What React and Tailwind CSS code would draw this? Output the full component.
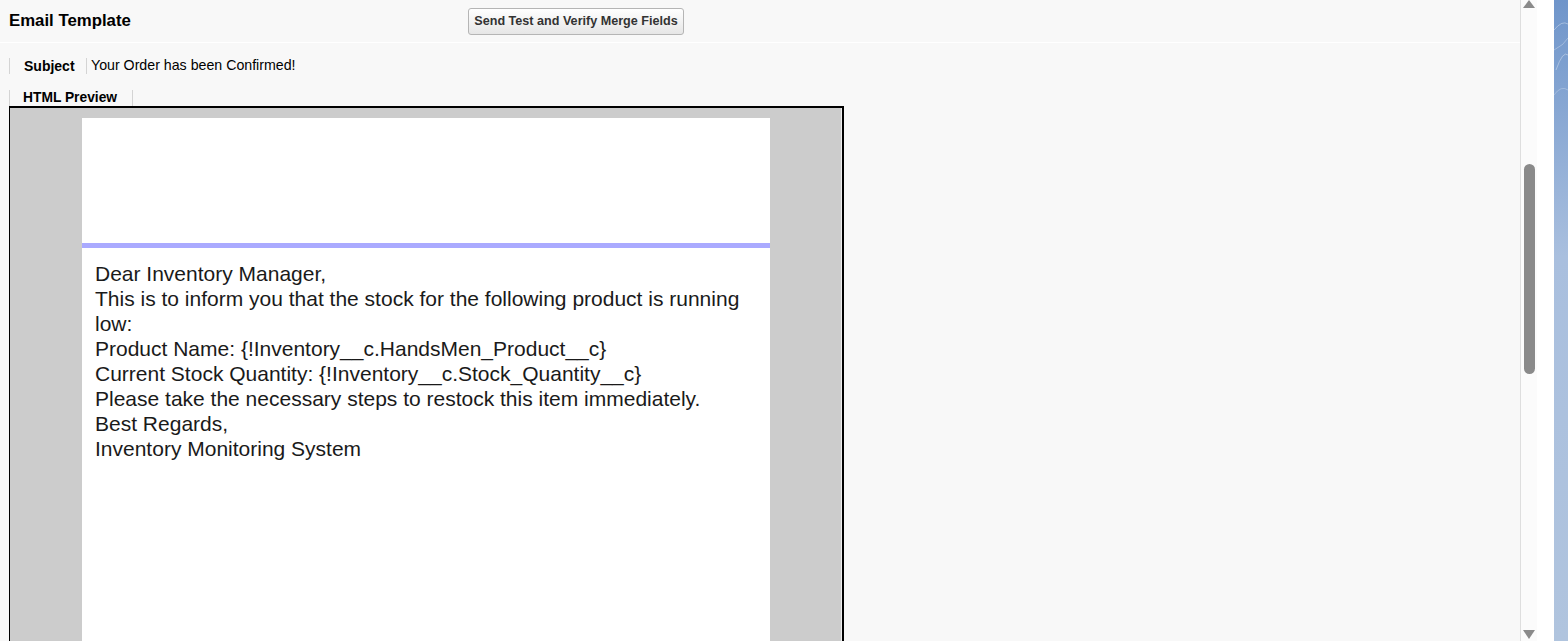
export default function App() {
  const lines = [
    "Dear Inventory Manager,",
    "This is to inform you that the stock for the following product is running low:",
    "Product Name: {!Inventory__c.HandsMen_Product__c}",
    "Current Stock Quantity: {!Inventory__c.Stock_Quantity__c}",
    "Please take the necessary steps to restock this item immediately.",
    "Best Regards,",
    "Inventory Monitoring System",
  ];
  return (
    <div
      className="flex h-[641px] w-[1568px] overflow-hidden bg-white"
      style={{ fontFamily: '"Liberation Sans", Arial, sans-serif' }}
    >
      {/* main page */}
      <div className="flex w-[1521px] shrink-0 flex-col border-r border-[#dedede] bg-[#f8f8f8]">
        {/* header */}
        <div className="flex h-[43px] shrink-0 items-center border-b border-white">
          <div className="w-[468px] shrink-0 pl-[9px] text-[16.8px] font-bold text-black">
            Email Template
          </div>
          <button className="h-[27px] w-[216px] rounded-[3px] border border-[#b5b5b5] bg-gradient-to-b from-[#ffffff] to-[#e6e6e6] text-[12.6px] font-bold text-[#333]">
            Send Test and Verify Merge Fields
          </button>
        </div>
        {/* subject row */}
        <div className="mt-[15px] flex h-[16px] items-center pl-[9px] text-[14.2px] text-black">
          <div className="flex h-full w-[77px] items-center border-l border-[#d4d4d4] pl-[14px] text-[14px] font-bold">
            Subject
          </div>
          <div className="flex h-full items-center border-l border-[#d4d4d4] pl-[4px]">
            Your Order has been Confirmed!
          </div>
        </div>
        {/* HTML Preview tab */}
        <div className="mt-[16px] flex h-[16px] items-center pl-[9px] text-[13.8px] font-bold text-black">
          <div className="flex h-full w-[124px] items-center border-x border-[#d4d4d4] pl-[13px]">
            HTML Preview
          </div>
        </div>
        {/* frame */}
        <div className="ml-[9px] h-[600px] w-[835px] shrink-0 border-l border-r-2 border-t-2 border-black">
          <div className="h-full border-r border-[#eeeeee] bg-[#cccccc] pt-[10px]">
            <div className="ml-[72px] h-full w-[688px] bg-white">
              <div className="h-[125px]" />
              <div className="h-[5px] bg-[#aaaaff]" />
              <div className="px-[13px] pt-[13px] text-[21px] leading-[25px] text-[#1a1a1a]">
                {lines.map((l, i) => (
                  <div key={i}>{l}</div>
                ))}
              </div>
            </div>
          </div>
        </div>
      </div>
      {/* scrollbar */}
      <div className="flex w-[16px] shrink-0 flex-col items-center bg-[#fbfbfb]">
        <svg width="14" height="9" viewBox="0 0 14 9" className="shrink-0">
          <polygon points="7,0 13,8 1,8" fill="#8a8a8a" />
        </svg>
        <div className="mt-[155px] h-[210px] w-[11px] shrink-0 rounded-full bg-[#8a8a8a]" />
        <div className="flex-1" />
        <svg width="14" height="11" viewBox="0 0 14 11" className="mb-[1px] shrink-0">
          <polygon points="1,1 13,1 7,10" fill="#8a8a8a" />
        </svg>
      </div>
      <div className="w-[17px] shrink-0 bg-white" />
      {/* blue background */}
      <div className="relative flex-1 bg-gradient-to-b from-[#6f95ca] via-[#a9bfde] via-40% to-[#b0c4de]">
        <svg className="absolute inset-0" width="14" height="300" viewBox="0 0 14 300">
          <path d="M0 30 Q8 20 14 24" stroke="#ffffff" strokeOpacity="0.35" fill="none" />
          <path d="M0 50 Q10 45 14 38" stroke="#ffffff" strokeOpacity="0.3" fill="none" />
          <path d="M2 70 Q9 50 14 55" stroke="#ffffff" strokeOpacity="0.35" fill="none" />
          <path d="M0 95 Q7 85 14 90" stroke="#ffffff" strokeOpacity="0.25" fill="none" />
        </svg>
      </div>
    </div>
  );
}
